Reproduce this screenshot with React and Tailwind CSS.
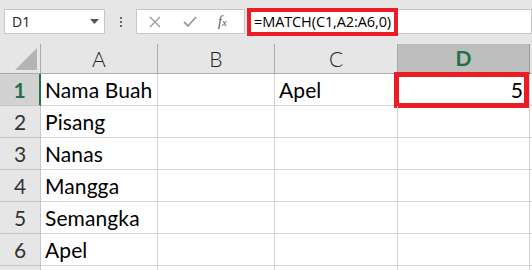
import React from "react";

const cells = [
  ["Nama Buah", "", "Apel", "5"],
  ["Pisang", "", "", ""],
  ["Nanas", "", "", ""],
  ["Mangga", "", "", ""],
  ["Semangka", "", "", ""],
  ["Apel", "", "", ""],
  ["", "", "", ""],
];

const cols = ["A", "B", "C", "D"];

const App = () => {
  return (
    <div className="w-[532px] h-[270px] overflow-hidden bg-[#e6e6e6] font-['Lato',sans-serif]">
      {/* formula bar */}
      <div className="h-[44px] flex items-start pt-[9px]">
        <div className="ml-[4px] w-[101px] h-[25px] bg-white border border-[#c6c6c6] flex items-center justify-between pl-[7px] pr-[5px]">
          <span className="text-[14px] text-[#222] font-['Open_Sans',sans-serif]">D1</span>
          <svg width="9" height="5" viewBox="0 0 9 5">
            <path d="M0 0h9L4.5 5z" fill="#555" />
          </svg>
        </div>
        <div className="w-[31px] h-[25px] flex flex-col items-center justify-center gap-[2px]">
          <span className="w-[2px] h-[2px] bg-[#666]" />
          <span className="w-[2px] h-[2px] bg-[#666]" />
          <span className="w-[2px] h-[2px] bg-[#666]" />
        </div>
        <div className="w-[109px] h-[25px] bg-white border border-[#c6c6c6] flex items-center">
          <svg className="ml-[12px]" width="12" height="12" viewBox="0 0 12 12">
            <path d="M1 1l10 10M11 1L1 11" stroke="#9a9a9a" strokeWidth="1.4" />
          </svg>
          <svg className="ml-[22px]" width="14" height="12" viewBox="0 0 14 12">
            <path d="M1 6l4 4 8-9" stroke="#9a9a9a" strokeWidth="1.8" fill="none" />
          </svg>
          <span className="ml-[21px] text-[14px] italic font-['Liberation_Serif',serif] text-[#555]">
            f<span className="text-[11px]">x</span>
          </span>
        </div>
        <div className="relative ml-[2px] flex-1 h-[25px] bg-white border border-[#c6c6c6] flex items-center pl-[6px]">
          <span className="text-[14.5px] text-black font-['Open_Sans',sans-serif] tracking-[-0.1px]">
            =MATCH(C1,A2:A6,0)
          </span>
          <div className="absolute left-[-1px] top-[-2px] w-[151px] h-[28px] border-[4px] border-[#ec1c24]" />
        </div>
      </div>

      {/* grid */}
      <div className="grid grid-cols-[41px_117px_117px_123px_132px_1fr] grid-rows-[30px_repeat(7,32px)] bg-white">
        <div className="bg-[#e6e6e6] border-r border-b border-[#ababab] flex items-end justify-end pr-[3px] pb-[3px]">
          <svg width="22" height="22" viewBox="0 0 22 22">
            <path d="M22 0V22H0z" fill="#b4b4b4" />
          </svg>
        </div>
        {cols.map((c) => (
          <div
            key={c}
            className={
              c === "D"
                ? "bg-[#bebebe] border-r border-b-2 border-[#9e9e9e] border-b-[#217346] flex items-center justify-center text-[21px] font-bold text-[#217346]"
                : "bg-[#e6e6e6] border-r border-b border-[#ababab] flex items-center justify-center text-[21px] font-light text-[#222]"
            }
          >
            {c}
          </div>
        ))}
        <div className="bg-[#e6e6e6] border-b border-[#ababab]" />

        {cells.map((row, i) => (
          <React.Fragment key={i}>
            <div
              className={
                i === 0
                  ? "bg-[#d2d2d2] border-r-2 border-b border-[#c6c6c6] border-r-[#217346] flex items-center justify-center text-[21px] font-bold text-[#217346]"
                  : "bg-[#e6e6e6] border-r border-b border-[#c6c6c6] flex items-center justify-center text-[21px] font-normal text-[#333]"
              }
            >
              {i < 6 ? i + 1 : ""}
            </div>
            {row.map((v, j) => (
              <div
                key={j}
                className={`relative border-r border-b border-[#d4d4d4] flex items-center text-[21px] text-black tracking-[0.1px] ${
                  j === 3 ? "justify-end pr-[6px]" : "pl-[4px]"
                }`}
              >
                {v}
                {i === 0 && j === 3 && (
                  <div className="absolute left-[-4px] top-[-2px] w-[135px] h-[36px] border-[5px] border-[#ec1c24]" />
                )}
              </div>
            ))}
            <div className="border-b border-[#d4d4d4]" />
          </React.Fragment>
        ))}
      </div>
    </div>
  );
};

export default App;
